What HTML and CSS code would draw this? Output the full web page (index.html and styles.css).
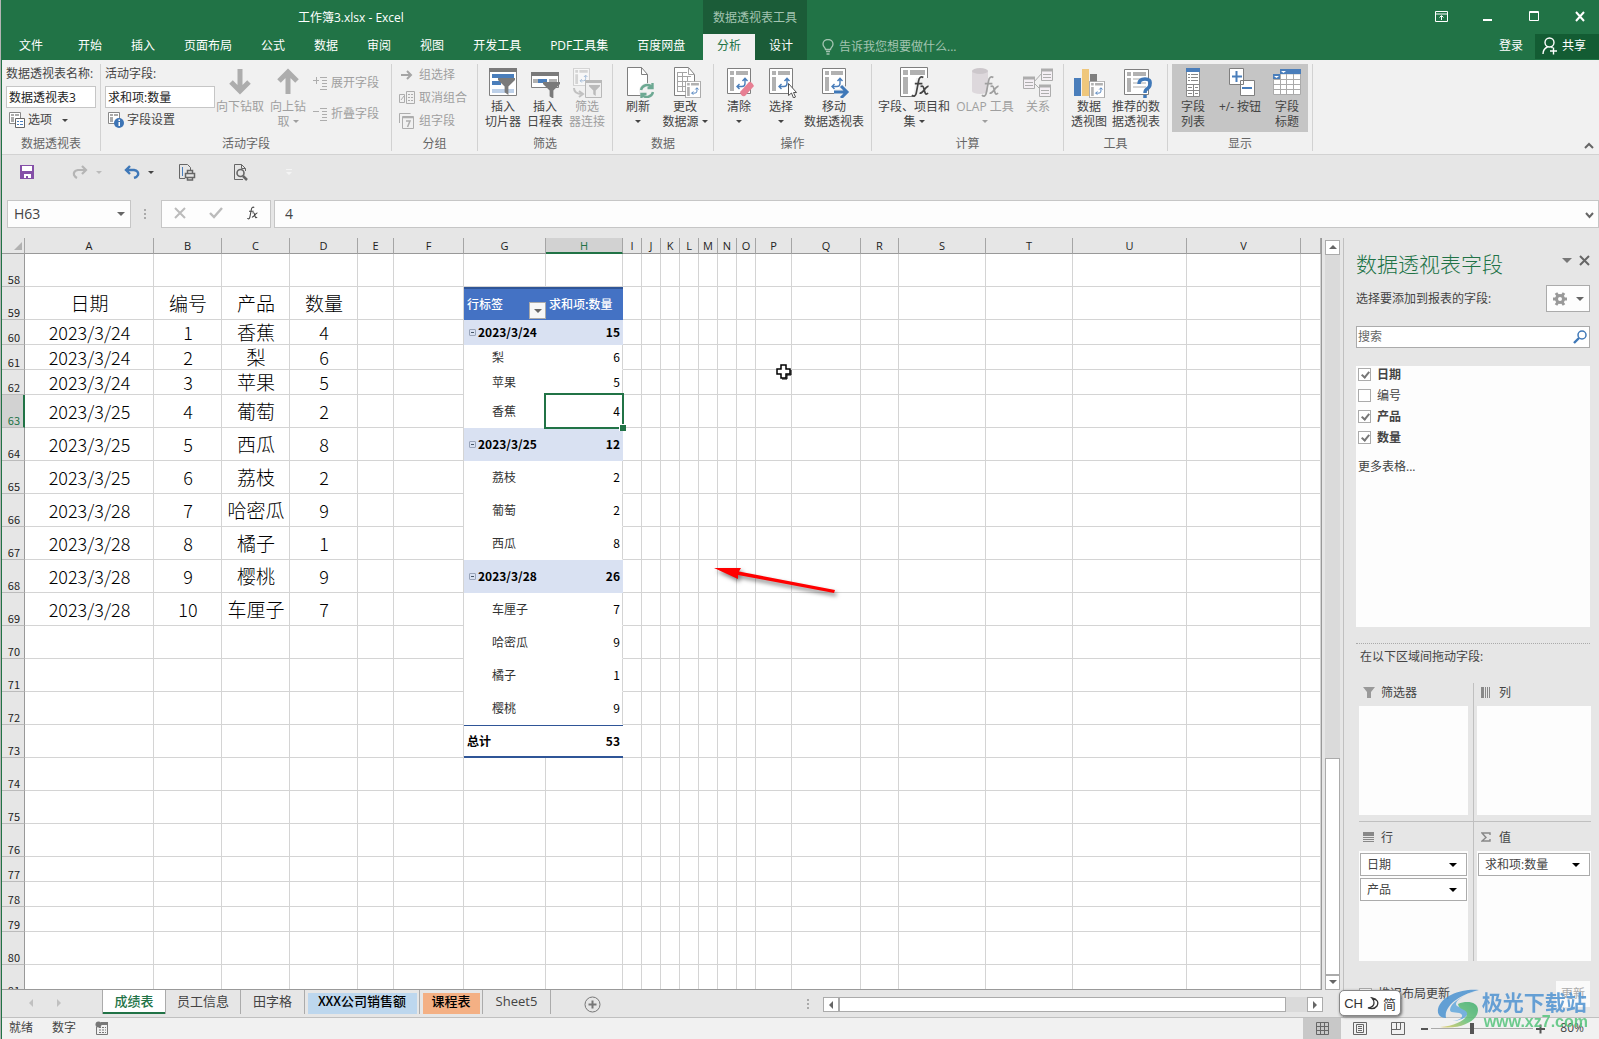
FILE: index.html
```html
<!DOCTYPE html>
<html lang="zh-CN">
<head>
<meta charset="utf-8">
<meta name="viewport" content="width=device-width, initial-scale=1">
<title>工作簿3.xlsx - Excel</title>
<link rel="stylesheet" href="styles.css">
</head>
<body>
<svg class="defs" aria-hidden="true">
  <symbol id="pivot" viewBox="0 0 24 26">
    <path d="M.5.5h23v25H.5z" fill="#fff" stroke="#7f7f7f"/>
    <path d="M3 3h4v4H3zM9 3h12v4H9zM3 9h4v14H3z" fill="#b1b1b1"/>
    <path d="M10 18.500h5q3 0 3-3V11M15.500 13l2.500-2.700 2.500 2.700M12.500 16L10 18.500l2.500 2.500" fill="none" stroke="#4a7ebb" stroke-width="1.400"/>
  </symbol>
  <symbol id="funnel" viewBox="0 0 18 18"><path d="M0 0h18v2l-7 7v9l-4-3V9L0 2z" fill="#7a7a7a"/></symbol>
  <symbol id="fx" viewBox="0 0 20 24">
    <path d="M1 21c2 2 4 1 4.500-2L8 6c.6-3.500 2.500-5 5-3.500M4 9h8M10 12c3-1 3 0 4 4s1.500 5 4 3M18.500 12c-3-1-6 8-9.500 7" fill="none" stroke="currentColor" stroke-width="1.800"/>
  </symbol>
  <symbol id="mini" viewBox="0 0 16 16">
    <path d="M.5.5h11v11H.5z" fill="#fff" stroke="#888"/><path d="M2 2h3v2H2zM6 2h4v2H6zM2 5h3v5H2z" fill="#aaa"/>
  </symbol>
</svg>

<div class="app">
  <header class="titlebar">
    <div class="titlebar-main">
      <div class="doc-title">工作簿3.xlsx - Excel</div>
      <nav class="tabs">
        <a href="#" class="tab tab-file">文件</a><a href="#" class="tab">开始</a><a href="#" class="tab">插入</a><a href="#" class="tab">页面布局</a><a href="#" class="tab">公式</a><a href="#" class="tab">数据</a><a href="#" class="tab">审阅</a><a href="#" class="tab">视图</a><a href="#" class="tab">开发工具</a><a href="#" class="tab">PDF工具集</a><a href="#" class="tab">百度网盘</a>
      </nav>
    </div>
    <div class="context">
      <div class="context-title">数据透视表工具</div>
      <nav class="context-tabs"><a href="#" class="active">分析</a><a href="#">设计</a></nav>
    </div>
    <button class="tell-me"><svg width="12" height="16" viewBox="0 0 12 16" fill="none" stroke="currentColor" stroke-width="1.300"><path d="M3.500 10.500C3.500 8.500 1 8 1 5a5 4.500 0 0 1 10 0c0 3-2.500 3.500-2.500 5.500zM4 12.500h4M4.500 15h3"/></svg>告诉我您想要做什么...</button>
    <div class="window-side">
      <div class="window-buttons">
        <button aria-label="功能区显示选项"><svg width="14" height="12" viewBox="0 0 14 12" fill="none" stroke="#fff"><path d="M.5.5h12v10H.5zM.5 3h12M6.500 9V5M4.500 6.500l2-2 2 2"/></svg></button>
        <button aria-label="最小化"><svg width="10" height="10"><path d="M0 7h9v2H0z" fill="#fff"/></svg></button>
        <button aria-label="最大化"><svg width="11" height="11" fill="none" stroke="#fff"><path d="M.5.5h9v9h-9zM0 1.500h10"/></svg></button>
        <button aria-label="关闭"><svg width="11" height="11" stroke="#fff" stroke-width="2"><path d="M1 1l8 9M9 1L1 10"/></svg></button>
      </div>
      <div class="account"><a href="#">登录</a><button class="share"><svg width="16" height="18" viewBox="0 0 16 18" fill="none" stroke="#fff" stroke-width="1.400"><circle cx="7.500" cy="5.500" r="4.500"/><path d="M1 17c0-4 2-6 4.500-7M9.500 10l1 1M8 14h7M11.500 10.500v7"/></svg>共享</button></div>
    </div>
  </header>

  <section class="ribbon" aria-label="功能区">
    <div class="group g-name">
      <div class="body stack">
        <label for="pt-name">数据透视表名称:</label>
        <input id="pt-name" value="数据透视表3">
        <button class="line"><svg width="16" height="16"><use href="#mini" width="16" height="16"/><path d="M6.500 6.500h9v9h-9z" fill="#fff" stroke="#666"/><path d="M8 9.500h2M11 9.500h3M8 12.500h2M11 12.500h3" stroke="#4a7ebb"/></svg>选项<i class="caret wide"></i></button>
      </div>
      <div class="caption">数据透视表</div>
    </div>
    <div class="group g-field">
      <div class="body">
        <div class="stack field-stack">
          <label for="active-field">活动字段:</label>
          <input id="active-field" value="求和项:数量">
          <button class="line"><svg width="16" height="16"><use href="#mini" width="16" height="16"/><circle cx="11" cy="11" r="5" fill="#3d74b5"/><path d="M10.500 7.500h1.500v1.500h-1.500zM10.500 10h1.500v4h-1.500z" fill="#fff"/></svg>字段设置</button>
        </div>
        <button class="big w48" disabled><svg width="32" height="32" fill="none" stroke="#adadad" stroke-width="5"><path d="M16 3v22M7 16l9 9 9-9"/></svg><span>向下钻取</span></button>
        <button class="big w48" disabled><svg width="32" height="32" fill="none" stroke="#adadad" stroke-width="5"><path d="M16 28V6M7 15l9-9 9 9"/></svg><span>向上钻<br>取<i class="caret"></i></span></button>
        <div class="pair">
          <button class="line" disabled><svg width="15" height="14" stroke="#adadad"><path d="M0 4.500h6M3.500 1v7M7 1.500h7M9 4.500h5M9 7.500h5M9 10.500h5M7 13.500h7"/></svg>展开字段</button>
          <button class="line" disabled><svg width="15" height="14" stroke="#adadad"><path d="M0 4.500h6M7 1.500h7M9 4.500h5M9 7.500h5M9 10.500h5M7 13.500h7"/></svg>折叠字段</button>
        </div>
      </div>
      <div class="caption">活动字段</div>
    </div>
    <div class="group g-group">
      <div class="body stack">
        <button class="line" disabled><svg width="16" height="14" fill="none" stroke="#a5a5a5" stroke-width="2"><path d="M2 7h10M8 3l4 4-4 4"/></svg>组选择</button>
        <button class="line" disabled><svg width="16" height="14" fill="none" stroke="#adadad"><path d="M.5 3.500h5v8h-5zM2 9l3-4M7.500.5h8v12h-8zM9 3.500h2M12 3.500h2M9 6.500h2M12 6.500h2M9 9.500h2M12 9.500h2"/></svg>取消组合</button>
        <button class="line" disabled><svg width="16" height="16" fill="none" stroke="#adadad"><path d="M.5 10V.5h11M3.500 3.500h11v12h-11z"/><path d="M3.500 4.500h11M7 8h4l-2.500 6" stroke-width="1.500"/></svg>组字段</button>
      </div>
      <div class="caption">分组</div>
    </div>
    <div class="group g-filter">
      <div class="body pad">
        <button class="big w42"><svg width="32" height="32"><path d="M2.500 3.500h27v26h-27z" fill="#fff" stroke="#7f7f7f"/><path d="M2 2h28v4H2z" fill="#7a7a7a"/><path d="M5 8h22v4H5zM5 15h9v4H5z" fill="#4a7ebb"/><path d="M5 23h22v4H5z" fill="#bdd0e8"/><use href="#funnel" x="11" y="12" width="17" height="17"/></svg><span>插入<br>切片器</span></button>
        <button class="big w42"><svg width="32" height="32"><path d="M2.500 7.500h27v14h-27z" fill="#fff" stroke="#7f7f7f"/><path d="M2 6h28v4H2z" fill="#7a7a7a"/><path d="M4 13h5v4H4zM20 13h8v4h-8z" fill="#b1b1b1"/><path d="M9 13h9v4H9z" fill="#4a7ebb"/><use href="#funnel" x="14" y="16" width="17" height="17"/></svg><span>插入<br>日程表</span></button>
        <button class="big w42" disabled><svg width="32" height="32" class="faded"><use href="#pivot" x="2" y="2" width="17" height="18"/><path d="M14.500 14.500h16v17h-16z" fill="#eee" stroke="#777"/><path d="M14 14h17v3H14z" fill="#777"/><use href="#funnel" x="18" y="19" width="11" height="11"/><path d="M3 22q0 6 8 6M8 25l4 3-4 3" fill="none" stroke="#888" stroke-width="2"/></svg><span>筛选<br>器连接</span></button>
      </div>
      <div class="caption">筛选</div>
    </div>
    <div class="group g-data">
      <div class="body pad-s">
        <button class="big w46"><svg width="32" height="32"><path d="M5.500 1.500h14l6 7v21h-20z" fill="#fff" stroke="#7f7f7f"/><path d="M19.500 1.500v7h6" fill="none" stroke="#7f7f7f"/><circle cx="25" cy="25" r="8" fill="#f1f1f1"/><path d="M19 24a6.500 6.500 0 0 1 11-3M31 26a6.500 6.500 0 0 1-11 3M30.500 17v5h-5M19.500 33v-5h5" fill="none" stroke="#6da993" stroke-width="2.400"/></svg><span>刷新<br><i class="caret alone"></i></span></button>
        <button class="big w48"><svg width="32" height="32"><path d="M5.500 1.500h14l6 7v21h-20z" fill="#fff" stroke="#7f7f7f"/><path d="M19.500 1.500v7h6M8 10.500h14M8 15.500h14M8 20.500h14M8 25.500h14M8.500 6v20M13.500 6v20M18.500 10v16M8 6.500h10" fill="none" stroke="#a5a5a5"/><use href="#pivot" x="16" y="15" width="16" height="17"/></svg><span>更改<br>数据源<i class="caret"></i></span></button>
      </div>
      <div class="caption">数据</div>
    </div>
    <div class="group g-action">
      <div class="body pad">
        <button class="big w42"><svg width="32" height="32"><use href="#pivot" x="4" y="2" width="24" height="26"/><path d="M17 26l9-10q2-1 5 4l-9 10q-4 1-5-4z" fill="#e77f93"/></svg><span>清除<br><i class="caret alone"></i></span></button>
        <button class="big w42"><svg width="32" height="32"><use href="#pivot" x="4" y="2" width="24" height="26"/><path d="M23.500 17.500v12l3-2.500 2 5 2-1-2-4.500h3z" fill="#fff" stroke="#555"/></svg><span>选择<br><i class="caret alone"></i></span></button>
        <button class="big w64"><svg width="32" height="32"><use href="#pivot" x="4" y="2" width="24" height="26"/><path d="M16 26h13M23 20l6 6-6 6" fill="none" stroke="#f1f1f1" stroke-width="6"/><path d="M16 26h13M23 20l6 6-6 6" fill="none" stroke="#3f78b8" stroke-width="3"/></svg><span>移动<br>数据透视表</span></button>
      </div>
      <div class="caption">操作</div>
    </div>
    <div class="group g-calc">
      <div class="body pad">
        <button class="big w76"><svg width="32" height="32"><path d="M2.500 1.500h27v29h-27z" fill="#fff" stroke="#7f7f7f"/><path d="M5 4h5v5H5zM12 4h15v5H12zM5 11h5v17H5z" fill="#b1b1b1"/><path d="M18 12h14v20H15z" fill="#f1f1f1"/><use href="#fx" x="13" y="9" width="19" height="23"/></svg><span>字段、项目和<br>集<i class="caret"></i></span></button>
        <button class="big w66" disabled><svg width="32" height="32"><path d="M3 5v20a8 3 0 0 0 16 0V5z" fill="#ddd8dc"/><ellipse cx="11" cy="5" rx="8" ry="3" fill="#ccc7cb"/><use href="#fx" x="12" y="9" width="19" height="23"/></svg><span>OLAP 工具<br><i class="caret alone"></i></span></button>
        <button class="big w40" disabled><svg width="32" height="32" fill="#f4eff4" stroke="#adadad"><path d="M12 16l8-9M12 17l8 8"/><path d="M1.500 11.500h11v11h-11zM19.500 3.500h11v11h-11zM17.500 19.500h11v11h-11z"/><path d="M1 12h12M19 4h12M17 20h12" stroke-width="3"/><path d="M3 16.500h8M3 19.500h8M21 8.500h8M21 11.500h8M19 24.500h8M19 27.500h8"/></svg><span>关系</span></button>
      </div>
      <div class="caption">计算</div>
    </div>
    <div class="group g-tools">
      <div class="body pad">
        <button class="big w42"><svg width="32" height="32"><path d="M1 12h7v18H1z" fill="#4a7ebb"/><path d="M9 3h7v27H9z" fill="#efc77c"/><path d="M17 8h7v12h-7z" fill="#7f7f7f"/><use href="#pivot" x="16" y="15" width="16" height="17"/></svg><span>数据<br>透视图</span></button>
        <button class="big w52"><svg width="32" height="32"><path d="M4.500 3.500h24v25h-24z" fill="#fff" stroke="#7f7f7f"/><path d="M7 6h4v4H7zM13 6h13v4H13zM7 12h4v14H7z" fill="#b1b1b1"/><path d="M13 13h13M13 17h13M13 21h13" stroke="#d5d5d5" stroke-width="2"/><path d="M19 18q0-5 6-5t5 5q0 3-3 5-2 1-2 4M25 29v4" fill="none" stroke="#3f78b8" stroke-width="3.500"/></svg><span>推荐的数<br>据透视表</span></button>
      </div>
      <div class="caption">工具</div>
    </div>
    <div class="group g-show">
      <div class="body pad">
        <button class="big w42 pressed"><svg width="32" height="32"><path d="M9.500 2.500h13v28h-13z" fill="#fff" stroke="#8a8a8a"/><path d="M9 2h14v4H9z" fill="#4a7ebb"/><path d="M11 8.500h2M14 8.500h7M11 11.500h2M14 11.500h7M11 14.500h2M14 14.500h7M10 18.500h12M10 24.500h12M16.500 18v12M11 21.500h4M18 21.500h3M11 27.500h4M18 27.500h3" stroke="#888"/></svg><span>字段<br>列表</span></button>
        <button class="big w52 pressed"><svg width="32" height="32"><path d="M5.500 2.500h14v16h-14zM16.500 14.500h14v15h-14z" fill="#fff" stroke="#7f7f7f"/><path d="M8 10.500h10M12.500 5v11M18 22h10" stroke="#4a7ebb" stroke-width="2"/></svg><span>+/- 按钮</span></button>
        <button class="big w42 pressed"><svg width="32" height="32"><path d="M2.500 8.500h27v20h-27z" fill="#fff"/><path d="M2.500 13.500h27M2.500 18.500h27M2.500 23.500h27M2.500 8v20.500h27V8M9.500 8v20M15.500 8v20M22.500 8v20" fill="none" stroke="#aaa"/><path d="M9 3h21v5H9v5H2V8h7z" fill="#4a7ebb"/><path d="M10 5h5l-2.500 2zM3 10h5l-2.500 2z" fill="#fff"/></svg><span>字段<br>标题</span></button>
      </div>
      <div class="caption">显示</div>
    </div>
    <button class="collapse" aria-label="折叠功能区"><svg width="10" height="8" fill="none" stroke="#666" stroke-width="2"><path d="M1 6l4-4 4 4"/></svg></button>
  </section>

  <div class="quick">
    <button aria-label="保存"><svg width="16" height="16"><path d="M1 1h14v14H1z" fill="#8550a8"/><path d="M3 2h10v5H3zM5 10h7v4H9v-2H7v2H5z" fill="#fff"/></svg></button>
    <button class="with-caret" aria-label="恢复" disabled><svg width="16" height="14" fill="none" stroke="#b5b5b5" stroke-width="2.200"><path d="M14 5H6q-5 1-4 5 1 2 3 3M10 1l4 4-4 4"/></svg><i class="caret"></i></button>
    <button class="with-caret" aria-label="撤消"><svg width="16" height="14" fill="none" stroke="#3f78b8" stroke-width="2.400"><path d="M2 5h8q5 1 4 5-1 2-4 3M6 1L2 5l4 4"/></svg><i class="caret"></i></button>
    <button aria-label="快速打印"><svg width="17" height="17" fill="none" stroke="#666"><path d="M6 14.500H.5V.5h8l3 3V7" /><path d="M3.500 3v9" stroke="#4a7ebb"/><path d="M6.500 9.500h9v4h-9zM8.500 9V6.500h5V9M8.500 13v3h5v-3" stroke-width="1.500"/></svg></button>
    <button aria-label="打印预览"><svg width="16" height="17" fill="none" stroke="#666"><path d="M10 15.500H1.500V.5h7l4 4V7M8.500.5v4h4"/><circle cx="7.500" cy="9" r="3.500" stroke-width="1.600"/><path d="M10 12l4 4" stroke-width="2.500"/></svg></button>
    <button class="customize" aria-label="自定义快速访问工具栏"><svg width="6" height="7"><path d="M0 0h6v1H0zM0 3h6L3 6z" fill="#f4f4f4"/></svg></button>
  </div>

  <div class="formula">
    <div class="name-box"><input aria-label="名称框" value="H63"><button aria-label="名称列表"><i class="caret dark"></i></button></div>
    <span class="grip"></span>
    <div class="fx-buttons">
      <button aria-label="取消"><svg width="12" height="12" stroke="#bbb" stroke-width="2"><path d="M1 1l10 10M11 1L1 11"/></svg></button>
      <button aria-label="输入"><svg width="14" height="12" fill="none" stroke="#bbb" stroke-width="2.400"><path d="M1 6l4 4 8-9"/></svg></button>
      <button aria-label="插入函数" class="fx"><svg width="13" height="14"><use href="#fx" width="13" height="14"/></svg></button>
    </div>
    <div class="formula-box"><input aria-label="编辑栏" value="4"><button aria-label="展开编辑栏"><svg width="9" height="7" fill="none" stroke="#666" stroke-width="2"><path d="M1 1l3.500 4L8 1"/></svg></button></div>
  </div>

  <main class="workspace">
    <div class="sheet-side">
      <div class="sheet-row">
        <div class="sheet">
          <table class="grid" id="grid">
            <colgroup><col class="c-row"><col class="c129"><col class="c68"><col class="c68"><col class="c68"><col class="c36"><col class="c70"><col class="c82"><col class="c77"><col class="c19"><col class="c19"><col class="c19"><col class="c19"><col class="c19"><col class="c19"><col class="c19"><col class="c36"><col class="c69"><col class="c38"><col class="c87"><col class="c87"><col class="c114"><col class="c114"><col></colgroup>
          </table>
          <svg class="cross" width="16" height="16"><path d="M5 1h5v4h4v5h-4v4H5v-4H1V5h4z" fill="#fff" stroke="#000" stroke-width="1.500"/><path d="M6 15h5v-4h4V6" fill="none" stroke="#000"/></svg>
          <svg class="arrow" width="136" height="40"><path d="M6 7l27 0-2 3.500L127 29l-1 3-96-18 0 4z" fill="#f00"/></svg>
        </div>
        <div class="vscroll">
          <button aria-label="向上滚动"><i class="caret up dark"></i></button>
          <div class="vtrack"></div><div class="vthumb"></div>
          <button aria-label="向下滚动"><i class="caret dark"></i></button>
        </div>
      </div>
      <div class="sheet-tabs">
        <div class="tab-arrows"><i></i><i class="right"></i></div>
        <button class="sheet-tab current">成绩表</button><button class="sheet-tab t-staff">员工信息</button><button class="sheet-tab t-grid">田字格</button><button class="sheet-tab t-blue">XXX公司销售额</button><button class="sheet-tab t-orange">课程表</button><button class="sheet-tab t-five">Sheet5</button>
        <button class="add" aria-label="新工作表"><svg width="17" height="17" fill="none" stroke="#777"><circle cx="8.500" cy="8.500" r="7.500"/><path d="M4.500 8.500h8M8.500 4.500v8" stroke-width="2"/></svg></button>
        <div class="hscroll">
          <span class="grip"></span>
          <button aria-label="向左滚动"><i class="tri-left"></i></button><div class="hthumb"></div><div class="htrack"></div><button aria-label="向右滚动"><i class="tri-right"></i></button>
        </div>
      </div>
    </div>

    <aside class="pane">
      <div class="pane-head"><h2>数据透视表字段</h2><button aria-label="任务窗格选项"><i class="caret big-caret"></i></button><button aria-label="关闭"><svg width="11" height="11" stroke="#666" stroke-width="2"><path d="M1 1l9 9M10 1L1 10"/></svg></button></div>
      <div class="pane-sub"><span>选择要添加到报表的字段:</span><button aria-label="工具"><svg width="14" height="14"><circle cx="7" cy="7" r="3.500" fill="none" stroke="#999" stroke-width="3"/><path d="M3 1l2 3M11 1L9 4M3 13l2-3M11 13l-2-3M0 7h3M11 7h3" stroke="#999" stroke-width="3"/></svg><i class="caret dark"></i></button></div>
      <div class="search"><input aria-label="搜索" placeholder="搜索"><svg width="14" height="14" fill="none" stroke="#3f78b8"><circle cx="9" cy="5" r="4" stroke-width="1.500"/><path d="M6 8l-5 5" stroke-width="2.400"/></svg></div>
      <div class="fields">
        <label class="on"><input type="checkbox" checked>日期</label>
        <label><input type="checkbox">编号</label>
        <label class="on"><input type="checkbox" checked>产品</label>
        <label class="on"><input type="checkbox" checked>数量</label>
        <a href="#">更多表格...</a>
      </div>
      <div class="areas-title">在以下区域间拖动字段:</div>
      <div class="areas">
        <section><h3><svg width="12" height="12"><path d="M0 0h12L8 5v6H4V5z" fill="#999"/></svg>筛选器</h3><div class="drop"></div></section>
        <section><h3><svg width="12" height="11"><path d="M0 0h3v11H0zM4 0h1v11H4zM6 0h1v11H6zM8 0h1v11H8z" fill="#888"/></svg>列</h3><div class="drop"></div></section>
        <section><h3><svg width="12" height="11"><path d="M0 0h11v4H0zM0 5h11v1H0zM0 7h11v1H0zM0 9h11v1H0z" fill="#888"/></svg>行</h3><div class="drop"><button>日期<i class="caret black"></i></button><button>产品<i class="caret black"></i></button></div></section>
        <section><h3><svg width="12" height="11" fill="none" stroke="#888" stroke-width="1.400"><path d="M9 3V1H1l4 4.500L1 9h8V7"/></svg>值</h3><div class="drop"><button>求和项:数量<i class="caret black"></i></button></div></section>
      </div>
      <div class="defer"><label><input type="checkbox">推迟布局更新</label><button disabled>更新</button></div>
    </aside>
  </main>

  <footer class="status">
    <span>就绪</span><span>数字</span>
    <svg width="14" height="14"><circle cx="3.500" cy="3.500" r="3" fill="#777"/><path d="M6 1h7v3H6z" fill="#777"/><path d="M1.500 6v7.500h11V4M4 6.500h2M7 6.500h2M10 6.500h1M4 9h2M7 9h2M10 9h1M4 11.500h2M7 11.500h2M10 11.500h1" fill="none" stroke="#777"/></svg>
    <div class="views">
      <button class="selected" aria-label="普通"><svg width="13" height="13" fill="none" stroke="#666"><path d="M.5.5h12v12H.5zM4.500 0v13M8.500 0v13M0 4.500h13M0 8.500h13"/></svg></button>
      <button aria-label="页面布局"><svg width="14" height="13" fill="none" stroke="#666"><path d="M.5.5h13v12H.5zM3.500 2.500h7v8h-7zM5 4.500h4M5 6.500h4M5 8.500h4"/></svg></button>
      <button aria-label="分页预览"><svg width="14" height="13" fill="none" stroke="#666"><path d="M.5.5h13v12H.5zM5.500.5v7M9.500.5v7M.5 7.500h9"/></svg></button>
      <button class="zoom-out" aria-label="缩小"><svg width="7" height="11"><path d="M0 5h7v2H0z" fill="#555"/></svg></button>
      <input type="range" min="10" max="400" value="162" aria-label="缩放级别">
      <button class="zoom-in" aria-label="放大"><svg width="9" height="11"><path d="M0 5h9v2H0zM3.500 1.500h2v9h-2z" fill="#555"/></svg></button>
      <span class="percent">80%</span>
    </div>
  </footer>

  <div class="ime">CH <svg width="12" height="13" fill="none" stroke="#333" stroke-width="1.300"><path d="M5 1q8 2 5 8-3 4-9 2 6-1 6-5 0-3-2-5z"/></svg> 简</div>
  <div class="watermark">
    <svg width="46" height="40" viewBox="0 0 46 40">
      <defs><linearGradient id="wg" x1="0" y1="1" x2="1" y2="0"><stop offset="0" stop-color="#e6c95c"/><stop offset=".5" stop-color="#63c07a"/><stop offset="1" stop-color="#3fae6e"/></linearGradient></defs>
      <path d="M43 1C28-1 5 6 2 20c-1 6 3 9 8 9-2-10 9-22 33-28z" fill="#4b93d2"/>
      <path d="M40 2C26 7 14 14 14 21c0 4 10 1 12 5 1 4-6 6-11 6 10 0 17-4 17-9 0-6-12-3-12-8 0-4 8-9 20-13z" fill="#63a8dd"/>
      <path d="M22 15c9-4 20-2 20 6 0 11-18 20-38 17 16-1 28-8 27-14-1-4-8-3-9-9z" fill="url(#wg)"/>
    </svg>
    <div><div class="wm-name">极光下载站</div><div class="wm-url">www.xz7.com</div></div>
  </div>
</div>
<script src="grid.js"></script>
</body>
</html>
```
FILE: styles.css
```css
* { box-sizing: border-box; }
body { margin: 0; padding-left: 1px; background: #b4b4b4; font: 12px/16px "Open Sans", "Noto Sans CJK SC", sans-serif; color: #444; }
button, input { font: inherit; color: inherit; }
button { border: 0; padding: 0; background: none; }
a { color: inherit; text-decoration: none; }
.defs { position: absolute; width: 0; height: 0; }
svg { flex: none; }
.app { position: relative; display: flex; flex-direction: column; height: 100vh; border-left: 1px solid #217346; background: #e6e6e6; overflow: hidden; }

.caret { display: inline-block; width: 0; height: 0; border: 3px solid transparent; border-top-color: currentColor; border-bottom: 0; margin-left: 3px; vertical-align: 3px; }
.caret.wide { margin-left: 7px; }
.caret.alone { margin-left: 0; }
.caret.dark { margin: 0; border-width: 4px 4px 0; color: #666; }
.caret.up { border: 4px solid transparent; border-bottom-color: #666; border-top: 0; }
.caret.big-caret { margin: 0; border-width: 5px 5px 0; color: #777; }
.caret.black { color: #000; border-width: 4px 4px 0; }

.titlebar { display: flex; height: 60px; flex: none; background: #217346; color: #fff; }
.titlebar-main { display: flex; flex-direction: column; width: 701px; }
.doc-title { height: 34px; line-height: 35px; padding-left: 296px; white-space: nowrap; }
.tabs { display: flex; gap: 29px; line-height: 24px; padding-left: 17px; white-space: nowrap; }
.tab-file { margin-right: 6px; }
.context { width: 104px; background: #1b5c38; }
.context-title { height: 34px; line-height: 35px; text-align: center; color: #a3c4b1; }
.context-tabs { display: flex; height: 26px; line-height: 24px; text-align: center; }
.context-tabs a { flex: 1; }
.context-tabs .active { background: #f1f1f1; color: #217346; }
.tell-me { display: flex; align-items: center; gap: 5px; align-self: flex-end; height: 26px; padding-left: 15px; color: #a3c4b1; }
.window-side { margin-left: auto; display: flex; flex-direction: column; align-items: flex-end; }
.window-buttons { display: flex; height: 34px; padding-bottom: 2px; }
.window-buttons button { width: 46px; }
.window-buttons button:last-child { width: 42px; padding-left: 4px; }
.account { display: flex; height: 25px; line-height: 24px; gap: 12px; }
.share { display: flex; align-items: center; gap: 4px; width: 64px; padding-left: 7px; padding-bottom: 2px; background: #135c33; }

.ribbon { display: flex; flex: none; height: 95px; background: #f1f1f1; border-bottom: 1px solid #d2d2d2; position: relative; }
.group { margin: 4px 0 3px; border-right: 1px solid #d2d2d2; display: flex; flex-direction: column; }
.body { display: flex; height: 68px; }
.caption { line-height: 20px; padding-top: 2px; text-align: center; color: #666; }
.g-name { width: 99px; } .g-field { width: 291px; } .g-group { width: 86px; }
.g-filter { width: 135px; } .g-data { width: 101px; } .g-action { width: 158px; }
.g-calc { width: 192px; } .g-tools { width: 104px; } .g-show { width: 145px; }
.pad { padding-left: 4px; } .pad-s { padding-left: 2px; }
.stack { display: flex; flex-direction: column; padding-left: 4px; }
.stack label { line-height: 20px; height: 22px; white-space: nowrap; }
.stack input { width: 90px; height: 23px; border: 1px solid #c6c6c6; background: #fff; padding: 0 2px; color: #222; }
.field-stack { width: 115px; }
.field-stack input { width: 110px; }
.line { display: flex; align-items: center; gap: 3px; height: 24px; white-space: nowrap; }
.stack .line { padding-left: 3px; }
.g-group .stack .line { height: 23px; gap: 4px; }
.big { display: flex; flex-direction: column; align-items: center; justify-content: flex-start; gap: 1px; height: 68px; line-height: 15px; padding-top: 2px; text-align: center; white-space: nowrap; }
.big:disabled, .line:disabled { color: #9f9f9f; }
.faded { opacity: .45; }
.w40 { width: 40px; } .w42 { width: 42px; } .w46 { width: 46px; } .w48 { width: 48px; } .w52 { width: 52px; }
.w64 { width: 64px; } .w66 { width: 66px; } .w76 { width: 76px; }
.pressed { background: #c5c5c5; }
.pair { display: flex; flex-direction: column; gap: 7px; padding: 7px 0 0 1px; }
.collapse { margin-left: auto; width: 20px; align-self: flex-end; height: 16px; }

.quick { display: flex; align-items: center; flex: none; height: 45px; padding: 0 0 11px 17px; gap: 37px; }
.quick button { display: flex; align-items: center; gap: 5px; }
.quick .with-caret { margin-right: -15px; }
.quick .with-caret + button:not(.with-caret) { margin-left: 3px; }
.quick button:disabled { color: #bbb; }

.formula { display: flex; flex: none; height: 38px; padding: 0 0 10px 5px; font-size: 14px; }
.name-box, .fx-buttons, .formula-box { display: flex; border: 1px solid #c6c6c6; background: #fdfdfd; }
.name-box { width: 124px; }
.name-box input, .formula-box input { flex: 1; min-width: 0; border: 0; background: none; padding: 0 6px; }
.formula-box input { padding-left: 10px; }
.name-box button { width: 18px; line-height: 1px; }
.formula .grip { margin: 9px 13px 0; }
.grip { width: 2px; height: 11px; background: repeating-linear-gradient(#aaa 0 2px, transparent 2px 4px); }
.fx-buttons { width: 110px; margin-left: 2px; justify-content: space-around; }
.formula-box { flex: 1; margin-left: 3px; }
.formula-box button { width: 18px; }

.workspace { display: flex; flex: 1; min-height: 0; }
.sheet-side { display: flex; flex-direction: column; flex: 1; min-width: 0; }
.sheet-row { display: flex; flex: 1; min-height: 0; }
.sheet { position: relative; flex: 1; min-width: 0; overflow: hidden; border-right: 1px solid #999; border-bottom: 1px solid #999; }
.grid { table-layout: fixed; width: 100%; border-spacing: 0; background: #fff; color: #000; }
.c-row { width: 23px; } .c19 { width: 19px; } .c36 { width: 36px; } .c38 { width: 38px; } .c68 { width: 68px; } .c69 { width: 69px; }
.c70 { width: 70px; } .c77 { width: 77px; } .c82 { width: 82px; } .c87 { width: 87px; } .c114 { width: 114px; } .c129 { width: 129px; }
.grid th, .grid td { padding: 0; border: solid #d4d4d4; border-width: 0 1px 1px 0; white-space: nowrap; }
.grid th { font-weight: 400; font-size: 11px; background: #e6e6e6; color: #222; }
.grid thead th { height: 16px; line-height: 14px; border-color: #a5a5a5; border-bottom-color: #999; }
.grid tbody th { vertical-align: bottom; line-height: 14px; text-align: right; padding-right: 4px; border-color: #bbb; border-right-color: #999; font-family: "Noto Sans CJK SC", sans-serif; }
.grid thead .sel { background: #d2d2d2; color: #217346; border-bottom: 2px solid #217346; line-height: 13px; }
.grid tbody .sel { background: #d2d2d2; color: #217346; border-right: 2px solid #217346; padding-right: 3px; }
.grid .corner svg { display: block; margin-left: 11px; }
.tall { height: 33px; }
.short { height: 25px; }
.grid .text, .grid .num { text-align: center; font: 300 18px/20px "Noto Sans CJK SC", sans-serif; padding-left: 1px; }
.grid .text { font-size: 19px; }
.grid .p { border-color: #fff; font: 12px/16px "Noto Sans CJK SC", sans-serif; }
.grid .p.val { text-align: right; padding-right: 2px; border-right-color: #d4d4d4; position: relative; }
.grid .name { padding-left: 28px; color: #333; }
.grid .head { background: #4472c4; border-color: #4472c4; color: #fff; border-top: 2px solid #2f5597; border-right-width: 0; padding-left: 3px; font-weight: 500; position: relative; }
.grid .p.val.head { text-align: left; }
.grid .day { background: #d9e1f2; border-color: #d9e1f2; font-weight: 700; padding-left: 5px; }
.grid .val.day { border-right-color: #d9e1f2; }
.grid .p.total { font-weight: 700; border-top: 1px solid #2f5597; border-bottom: 2px solid #2f5597; border-right-width: 0; padding-left: 3px; }
.grid .p.val.total { padding-right: 3px; }
.toggle { display: inline-block; width: 7px; height: 7px; margin-right: 2px; border: 1px solid #9aa5ba; border-radius: 1px; background: linear-gradient(#456, #456) center / 3px 1px no-repeat; vertical-align: 1px; }
.filter { position: absolute; right: 0; bottom: 0; width: 17px; height: 17px; border: 1px solid #aaa; background: #f7f7f7; line-height: 8px; }
.cell-cursor { position: absolute; inset: -2px -2px -2px -2px; border: 2px solid #217346; pointer-events: none; z-index: 1; }
.cell-cursor::after { content: ""; position: absolute; right: -4px; bottom: -4px; width: 6px; height: 6px; background: #217346; border: 1px solid #fff; border-width: 1px 0 0 1px; }
.cross { position: absolute; left: 774px; top: 126px; }
.arrow { position: absolute; left: 706px; top: 323px; filter: drop-shadow(2px 3px 2px rgba(0, 0, 0, .5)); }

.vscroll { display: flex; flex-direction: column; width: 21px; padding: 2px 3px 0; background: #e6e6e6; }
.vscroll button, .vthumb { border: 1px solid #ababab; background: #fff; }
.vscroll button { height: 15px; line-height: 6px; }
.vtrack { flex: 504; background: #dadada; }
.vthumb { flex: 216; }

.sheet-tabs { display: flex; flex: none; height: 28px; border-bottom: 1px solid #c0c0c0; font-size: 13px; }
.tab-arrows { display: flex; justify-content: center; gap: 24px; width: 100px; padding: 9px 14px 0 0; }
.tab-arrows i { border: 4px solid transparent; border-right-color: #c0c0c0; width: 0; height: 8px; border-left: 0; }
.tab-arrows .right { border-right: 0; border-left: 4px solid #c0c0c0; }
.sheet-tab { height: 24px; border-right: 1px solid #ababab; padding-bottom: 2px; white-space: nowrap; }
.sheet-tab.current { width: 64px; height: 25px; background: #fff; color: #217346; border: solid #ababab; border-width: 0 1px 0; box-shadow: inset 0 -2px #217346; margin-top: -1px; font-weight: 500; }
.t-staff { width: 75px; } .t-grid { width: 64px; }
.t-blue { width: 115px; background: #bdd7ee; color: #000; font-weight: 500; font-family: "Noto Sans CJK SC", sans-serif; box-shadow: inset 3px 0 #e6e6e6, inset -2px 0 #e6e6e6, inset 0 3px #e6e6e6; }
.t-orange { width: 63px; background: #f4b084; color: #000; font-weight: 500; box-shadow: inset 3px 0 #e6e6e6, inset -2px 0 #e6e6e6, inset 0 3px #e6e6e6; }
.t-five { width: 68px; }
.add { margin-left: 33px; }
.add svg, .window-buttons svg { vertical-align: middle; }
.hscroll { display: flex; margin-left: auto; width: 516px; padding-top: 7px; height: 22px; margin-right: 20px; }
.hscroll .grip { margin: 2px 14px 0 0; }
.hscroll button, .hthumb { border: 1px solid #ababab; background: #fff; }
.hscroll button { width: 16px; display: flex; align-items: center; justify-content: center; }
.hthumb { flex: 448; }
.htrack { flex: 21; background: #dadada; }
.tri-left { border: 4px solid transparent; border-right-color: #666; border-left: 0; }
.tri-right { border: 4px solid transparent; border-left-color: #666; border-right: 0; }

.pane { width: 256px; flex: none; border-left: 1px solid #c0c0c0; border-bottom: 1px solid #c0c0c0; padding: 10px 9px 0 12px; overflow: hidden; background: #e6e6e6; }
.pane-head { display: flex; align-items: flex-start; gap: 7px; height: 37px; }
.pane-head h2 { flex: 1; margin: 0; font-size: 21px; line-height: 32px; font-weight: 300; color: #217346; }
.pane-head button { height: 28px; }
.pane-sub { display: flex; justify-content: space-between; height: 27px; line-height: 27px; }
.pane-sub button { display: flex; align-items: center; justify-content: center; gap: 9px; width: 44px; border: 1px solid #ababab; background: #fdfdfd; }
.search { display: flex; align-items: center; margin-top: 14px; height: 22px; border: 1px solid #ababab; background: #fff; padding-right: 2px; }
.search input { flex: 1; min-width: 0; border: 0; padding: 0 1px 2px; background: none; height: 20px; }
.search input::placeholder { color: #666; opacity: 1; }
.fields { margin-top: 18px; height: 261px; background: #fdfdfd; padding-left: 2px; }
.fields label { display: flex; align-items: center; gap: 6px; height: 21px; padding-bottom: 4px; }
.fields .on { font-weight: 700; }
.fields a { display: block; margin-top: 9px; }
input[type=checkbox] { appearance: none; width: 13px; height: 13px; margin: 0; border: 1px solid #ababab; background: #fff; position: relative; flex: none; }
input[type=checkbox]:checked::after { content: ""; position: absolute; left: 4px; top: 1px; width: 3px; height: 6px; border: solid #777; border-width: 0 2px 2px 0; transform: rotate(40deg); }
.areas-title { margin-top: 16px; padding: 5px 0 0 4px; border-top: 1px dotted #aaa; height: 40px; }
.areas { display: grid; grid-template-columns: 115px 1fr; margin: 0 -1px 0 3px; }
.areas section { height: 139px; display: flex; flex-direction: column; }
.areas section:nth-child(odd) { border-right: 1px solid #c0c0c0; padding-right: 5px; }
.areas section:nth-child(even) { padding-left: 3px; }
.areas section:nth-child(-n+2) { border-bottom: 1px solid #c0c0c0; padding-bottom: 6px; }
.areas section:nth-child(n+3) { padding-top: 6px; }
.areas h3 { display: flex; align-items: center; gap: 6px; margin: 0; padding: 0 0 4px 4px; font-size: 12px; font-weight: 400; line-height: 16px; height: 23px; }
.drop { flex: 1; background: #fdfdfd; padding: 2px 1px; display: flex; flex-direction: column; gap: 2px; }
.drop button { display: flex; align-items: center; justify-content: space-between; height: 23px; border: 1px solid #ababab; background: #fff; padding: 0 9px 0 6px; }
.defer { display: flex; justify-content: space-between; align-items: center; margin-top: 20px; padding-left: 3px; }
.defer label { display: flex; align-items: center; gap: 6px; }
.defer button { width: 34px; height: 26px; background: #fafafa; color: #aaa; }

.status { display: flex; flex: none; align-items: center; gap: 19px; height: 21px; padding-left: 7px; padding-bottom: 1px; background: #f1f1f1; }
.views { display: flex; align-items: center; margin-left: auto; height: 21px; margin-right: 15px; }
.views button { width: 38px; height: 21px; }
.views button svg { vertical-align: middle; }
.views .selected { background: #c8c8c8; }
.views .zoom-out { width: 14px; }
.views .zoom-in { width: 14px; }
.views input { appearance: none; width: 102px; height: 12px; margin: 0; background: linear-gradient(#aaa, #aaa) center / 100% 1px no-repeat; }
.views input::-webkit-slider-thumb { appearance: none; width: 4px; height: 11px; background: #555; }
.percent { margin-left: 13px; }

.ime { position: absolute; right: 198px; bottom: 23px; display: flex; align-items: center; gap: 4px; height: 26px; padding: 0 4px; border: 1px solid #888; border-radius: 5px; background: #fff; color: #333; font: 13px "Liberation Sans", "Noto Sans CJK SC", sans-serif; box-shadow: 1px 1px 3px #666; }
.watermark { position: absolute; right: 11px; bottom: 8px; display: flex; pointer-events: none; opacity: .85; }
.wm-name { font: 700 21px/24px "Noto Sans CJK SC", sans-serif; color: #4f93d1; }
.wm-url { font: 700 16px/18px "Liberation Sans", sans-serif; color: #55c47c; padding-left: 2px; }
```
FILE: grid.js
```js
// Source table (columns A-D) and pivot table (columns G-H), keyed by row number.
const letters = 'ABCDEFGHIJKLMNOPQRSTUV'.split('');
const source = {
  59: ['日期', '编号', '产品', '数量'],
  60: ['2023/3/24', '1', '香蕉', '4'], 61: ['2023/3/24', '2', '梨', '6'],
  62: ['2023/3/24', '3', '苹果', '5'], 63: ['2023/3/25', '4', '葡萄', '2'],
  64: ['2023/3/25', '5', '西瓜', '8'], 65: ['2023/3/25', '6', '荔枝', '2'],
  66: ['2023/3/28', '7', '哈密瓜', '9'], 67: ['2023/3/28', '8', '橘子', '1'],
  68: ['2023/3/28', '9', '樱桃', '9'], 69: ['2023/3/28', '10', '车厘子', '7']
};
const pivot = {
  59: ['head', '行标签', '求和项:数量'],
  60: ['day', '2023/3/24', '15'], 61: ['name', '梨', '6'], 62: ['name', '苹果', '5'], 63: ['name', '香蕉', '4'],
  64: ['day', '2023/3/25', '12'], 65: ['name', '荔枝', '2'], 66: ['name', '葡萄', '2'], 67: ['name', '西瓜', '8'],
  68: ['day', '2023/3/28', '26'], 69: ['name', '车厘子', '7'], 70: ['name', '哈密瓜', '9'], 71: ['name', '橘子', '1'], 72: ['name', '樱桃', '9'],
  73: ['total', '总计', '53']
};
const shortRows = [60, 61, 62, 77, 78, 79];

let html = '<thead><tr><th class="corner"><svg width="10" height="10"><path d="M9 1v8H1z" fill="#b1b1b1"/></svg></th>';
for (const l of letters) html += `<th${l === 'H' ? ' class="sel"' : ''}>${l}</th>`;
html += '<th></th></tr></thead><tbody>';
for (let r = 58; r <= 81; r++) {
  html += `<tr class="${shortRows.includes(r) ? 'short' : 'tall'}"><th${r === 63 ? ' class="sel"' : ''}>${r}</th>`;
  for (let c = 0; c < 23; c++) {
    if (c < 4 && source[r]) {
      const v = source[r][c];
      html += `<td class="${/^\d/.test(v) ? 'num' : 'text'}">${v}</td>`;
    } else if (c === 6 && pivot[r]) {
      const [kind, label] = pivot[r];
      const before = kind === 'day' ? '<i class="toggle"></i>' : '';
      const after = kind === 'head' ? '<button class="filter" aria-label="筛选"><i class="caret dark"></i></button>' : '';
      html += `<td class="p ${kind}">${before}${label}${after}</td>`;
    } else if (c === 7 && pivot[r]) {
      const [kind, , value] = pivot[r];
      html += `<td class="p val ${kind === 'name' ? '' : kind}">${value}${r === 63 ? '<span class="cell-cursor"></span>' : ''}</td>`;
    } else html += '<td></td>';
  }
  html += '</tr>';
}
document.getElementById('grid').insertAdjacentHTML('beforeend', html + '</tbody>');
```
